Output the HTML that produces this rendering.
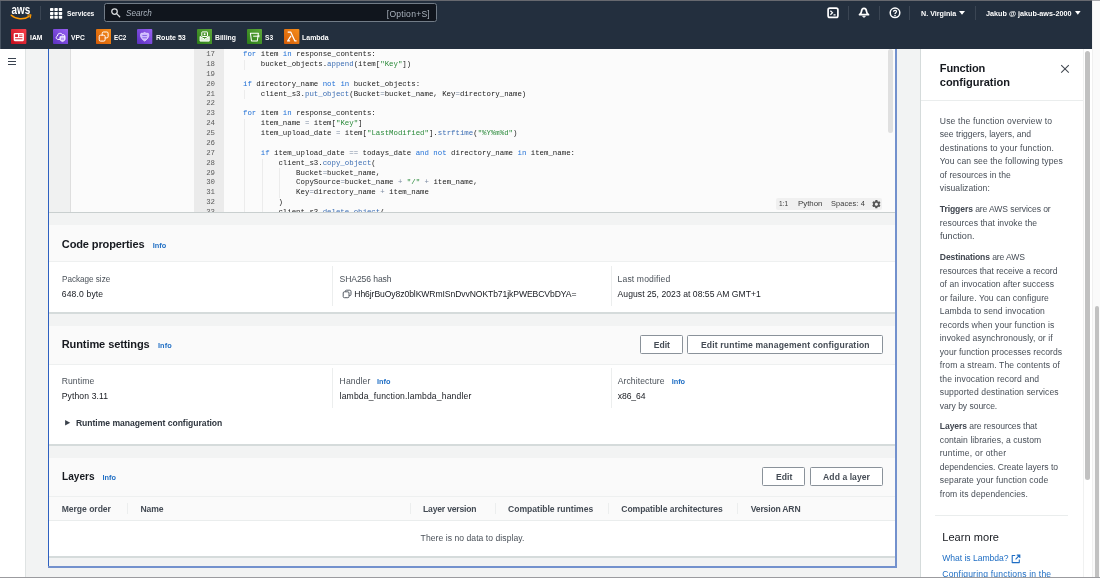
<!DOCTYPE html>
<html lang="en">
<head>
<meta charset="utf-8">
<title>Lambda - Function configuration</title>
<style>
*{box-sizing:border-box;margin:0;padding:0}
html,body{width:1100px;height:578px;overflow:hidden;background:#f2f3f3;font-family:"Liberation Sans",sans-serif;color:#16191f}
.a{position:absolute}
#tx{position:absolute;left:0;top:0;width:1100px;height:578px;will-change:transform}
.t{position:absolute;white-space:nowrap;line-height:1}
#nav{left:0;top:0;width:1091.800px;height:48.600px;background:#232f3e}
.nd{width:1px;background:#3a4553}
#pagesb{left:1091.800px;top:0;width:8.200px;height:578px;background:#fafafa;border-left:1px solid #f0f0f0}
#pagethumb{left:1094.600px;top:305.800px;width:4.400px;height:280px;background:#c1c1c1;border-radius:2.200px}
#leftcol{left:0;top:48.600px;width:25.500px;height:530px;background:#fff;border-right:1px solid #dfe3e3}
#panel{left:920px;top:49px;width:172px;height:529px;background:#fff;border-left:1px solid #d5dbdb}
.card-h{background:#fafafa;border-bottom:1px solid #eef0f0}
.card-b{background:#fff;border-bottom:2px solid #d5dbdb}
.btn{position:absolute;background:#fff;border:1px solid #8a929a;border-radius:1.500px}
.vd{position:absolute;width:1px;background:#eceeee}
.ig{position:absolute;width:1px;background:#ececec}
.code{font-family:"Liberation Mono",monospace;font-size:7.38px;color:#1a1a1a;white-space:pre;line-height:9.87px;will-change:transform}
.ln{font-family:"Liberation Mono",monospace;font-size:7.38px;color:#5c5c5c;white-space:pre;line-height:9.87px;text-align:right;will-change:transform}
.k{color:#1f6fd6}.f{color:#3b6db3}.s{color:#2a8a3a}.o{color:#7d8ca3}
b{font-weight:bold}

</style>
</head>
<body>
<div class="a" id="leftcol"></div>
<div class="a" id="panel"></div>
<div class="a" id="pagesb"></div>
<div class="a" id="pagethumb"></div>

<!-- editor -->
<div class="a" id="ed" style="left:49px;top:48.600px;width:847px;height:164.700px;background:#fbfbfb;border-bottom:1px solid #c9cfcf;overflow:hidden">
  <div class="a" style="left:0;top:0;width:22px;height:164px;background:#f0f1f1;border-right:1px solid #dedede"></div>
  <div class="a" style="left:145px;top:0;width:30px;height:164px;background:#ebebeb"></div>
  <div class="ig" style="left:195.300px;top:11.500px;height:9.900px"></div>
  <div class="ig" style="left:195.300px;top:41px;height:9.900px"></div>
  <div class="ig" style="left:195.300px;top:70.600px;height:100px"></div>
  <div class="ig" style="left:212.800px;top:110px;height:60px"></div>
  <div class="ig" style="left:230.200px;top:119.900px;height:29.600px"></div>
  <div class="a ln" id="lnums" style="left:144px;top:1.700px;width:22px">17
18
19
20
21
22
23
24
25
26
27
28
29
30
31
32
33</div>
  <div class="a code" id="code" style="left:194.300px;top:1.700px"><span class="k">for</span> item <span class="k">in</span> response_contents:
    bucket_objects.<span class="f">append</span>(item[<span class="s">"Key"</span>])

<span class="k">if</span> directory_name <span class="k">not</span> <span class="k">in</span> bucket_objects:
    client_s3.<span class="f">put_object</span>(Bucket<span class="o">=</span>bucket_name, Key<span class="o">=</span>directory_name)

<span class="k">for</span> item <span class="k">in</span> response_contents:
    item_name <span class="o">=</span> item[<span class="s">"Key"</span>]
    item_upload_date <span class="o">=</span> item[<span class="s">"LastModified"</span>].<span class="f">strftime</span>(<span class="s">"%Y%m%d"</span>)

    <span class="k">if</span> item_upload_date <span class="o">==</span> todays_date <span class="k">and</span> <span class="k">not</span> directory_name <span class="k">in</span> item_name:
        client_s3.<span class="f">copy_object</span>(
            Bucket<span class="o">=</span>bucket_name,
            CopySource<span class="o">=</span>bucket_name <span class="o">+</span> <span class="s">"/"</span> <span class="o">+</span> item_name,
            Key<span class="o">=</span>directory_name <span class="o">+</span> item_name
        )
        client_s3.<span class="f">delete_object</span>(</div>
  <div class="a" style="left:839px;top:0;width:5px;height:84px;background:#e0e0e0;border-radius:3px"></div>
  <div class="a" id="status" style="left:727px;top:149.100px;width:106.200px;height:12.600px;background:#f0f0f0;border-radius:2px"></div>
</div>

<!-- card 1 -->
<div class="a card-h" style="left:49px;top:225px;width:847px;height:36.800px"></div>
<div class="a card-b" style="left:49px;top:261.800px;width:847px;height:52px"></div>
<div class="vd" style="left:332px;top:266px;height:40px"></div>
<div class="vd" style="left:611px;top:266px;height:40px"></div>
<!-- card 2 -->
<div class="a card-h" style="left:49px;top:325.5px;width:847px;height:39px"></div>
<div class="a card-b" style="left:49px;top:364.500px;width:847px;height:81.600px"></div>
<div class="vd" style="left:332px;top:368px;height:40px"></div>
<div class="vd" style="left:611px;top:368px;height:40px"></div>
<div class="btn" style="left:640.3px;top:334.8px;width:42.5px;height:19.4px"></div>
<div class="btn" style="left:687.4px;top:334.8px;width:195.4px;height:19.4px"></div>
<!-- card 3 -->
<div class="a card-h" style="left:49px;top:457.500px;width:847px;height:39.500px"></div>
<div class="a" style="left:49px;top:497px;width:847px;height:24px;background:#fafafa;border-bottom:1px solid #eaeded"></div>
<div class="a card-b" style="left:49px;top:521px;width:847px;height:36.700px"></div>
<div class="btn" style="left:762.3px;top:466.6px;width:42.8px;height:19.8px"></div>
<div class="btn" style="left:810px;top:466.6px;width:73.1px;height:19.8px"></div>
<div class="vd" style="left:127px;top:503px;height:11px"></div>
<div class="vd" style="left:410px;top:503px;height:11px"></div>
<div class="vd" style="left:495px;top:503px;height:11px"></div>
<div class="vd" style="left:608px;top:503px;height:11px"></div>
<div class="vd" style="left:737px;top:503px;height:11px"></div>

<!-- panel -->
<div class="a" style="left:921px;top:100px;width:162px;height:1px;background:#eaeded"></div>
<div class="a" style="left:1083px;top:49px;width:1px;height:529px;background:#f0f1f1"></div>
<div class="a" style="left:1085.100px;top:51px;width:4.800px;height:428.500px;background:#c1c1c1;border-radius:2.500px"></div>
<div class="a" style="left:935px;top:515px;width:133px;height:1px;background:#eaeded"></div>


<!-- misc icons -->
<div class="a" style="left:8px;top:57.6px;width:8.400px;height:1px;background:#3a4350"></div>
<div class="a" style="left:8px;top:60.8px;width:8.400px;height:1px;background:#3a4350"></div>
<div class="a" style="left:8px;top:64.0px;width:8.400px;height:1px;background:#3a4350"></div>
<svg class="a" style="left:341.500px;top:288.500px" width="10.500" height="10" viewBox="0 0 10.500 10">
  <rect x="3.300" y="1.200" width="5.700" height="5.400" rx="1.200" fill="#fff" stroke="#545b64" stroke-width="1"/>
  <rect x="1.200" y="2.800" width="5.800" height="5.900" rx="1.200" fill="#fff" stroke="#545b64" stroke-width="1"/>
</svg>
<svg class="a" style="left:65px;top:420px" width="5.500" height="6" viewBox="0 0 5.500 6"><path d="M.1 .1L5.200 2.800L.1 5.500Z" fill="#3a414b"/></svg>
<svg class="a" style="left:1060px;top:63.500px" width="10" height="10" viewBox="0 0 10 10"><path d="M1.200 1.200L8.800 8.600M8.800 1.200L1.200 8.600" stroke="#414750" stroke-width="1.050" fill="none"/></svg>
<svg class="a" style="left:1011px;top:553.500px" width="10" height="10" viewBox="0 0 10 10">
  <path d="M4.200 1.500H1.200V8.600H8.300V5.600" stroke="#1f6ec4" stroke-width="1.100" fill="none" stroke-linejoin="round"/>
  <path d="M5.800 1.100H8.800V4.100M8.700 1.200L4.600 5.300" stroke="#1f6ec4" stroke-width="1.100" fill="none"/>
</svg>
<svg class="a" style="left:870.600px;top:198.500px" width="10.800" height="10.400" viewBox="0 0 24 24">
  <path fill="#555" d="M19.140 12.940c.040-.300.060-.610.060-.940 0-.320-.020-.640-.070-.940l2.030-1.580a.490.490 0 0 0 .120-.610l-1.920-3.320a.488.488 0 0 0-.590-.220l-2.390.960c-.500-.380-1.030-.700-1.620-.940l-.360-2.540a.484.484 0 0 0-.480-.410h-3.840c-.240 0-.430.170-.470.410l-.360 2.540c-.590.240-1.130.570-1.620.940l-2.390-.960c-.220-.080-.470 0-.590.220L2.740 8.870c-.120.210-.080.470.120.610l2.030 1.580c-.50.300-.90.630-.90.940s.20.640.70.940l-2.030 1.580a.490.490 0 0 0-.120.610l1.920 3.320c.120.220.370.290.590.220l2.390-.960c.500.380 1.030.700 1.620.940l.360 2.540c.50.240.240.410.480.410h3.840c.240 0 .440-.170.470-.410l.360-2.540c.590-.240 1.130-.560 1.620-.940l2.390.960c.220.080.470 0 .590-.220l1.920-3.320c.120-.220.070-.470-.120-.610l-2.010-1.580zM12 15.600c-1.980 0-3.600-1.620-3.600-3.600s1.620-3.600 3.600-3.600 3.600 1.620 3.600 3.600-1.620 3.600-3.600 3.600z"/>
</svg>

<!-- nav -->
<div class="a" id="nav"></div>
<div class="a" style="left:0;top:0;width:1px;height:48.6px;background:#465260"></div>
<!-- aws logo -->
<svg class="a" style="left:9px;top:4px;will-change:transform" width="26" height="18" viewBox="0 0 26 18">
  <text x="2.500" y="9.700" font-family="Liberation Sans, sans-serif" font-weight="bold" font-size="13.400" fill="#fff" textLength="18.700" lengthAdjust="spacingAndGlyphs">aws</text>
  <path d="M2.300 11.300 C6.500 15.300 15 15.900 20.100 12.300" stroke="#ff9900" stroke-width="1.500" fill="none" stroke-linecap="round"/>
  <path d="M18.700 11 L21.900 10.800 L21.300 13.900" stroke="#ff9900" stroke-width="1.100" fill="none" stroke-linecap="round" stroke-linejoin="round"/>
</svg>
<div class="a nd" style="left:40.400px;top:5.800px;height:13.800px"></div>
<!-- services grid -->
<svg class="a" style="left:50.400px;top:7.500px" width="12.400" height="11" viewBox="0 0 12.400 11">
  <g fill="#fff">
  <rect x="0" y="0" width="3.400" height="3" rx=".7"/><rect x="4.400" y="0" width="3.400" height="3" rx=".7"/><rect x="8.800" y="0" width="3.400" height="3" rx=".7"/>
  <rect x="0" y="3.900" width="3.400" height="3" rx=".7"/><rect x="4.400" y="3.900" width="3.400" height="3" rx=".7"/><rect x="8.800" y="3.900" width="3.400" height="3" rx=".7"/>
  <rect x="0" y="7.800" width="3.400" height="3" rx=".7"/><rect x="4.400" y="7.800" width="3.400" height="3" rx=".7"/><rect x="8.800" y="7.800" width="3.400" height="3" rx=".7"/>
  </g>
</svg>
<!-- search -->
<div class="a" style="left:104px;top:3.300px;width:332.600px;height:19.100px;background:#10151d;border:1.600px solid #727c87;border-radius:2.500px"></div>
<svg class="a" style="left:110px;top:7px" width="12" height="12" viewBox="0 0 12 12">
  <circle cx="4.500" cy="4.500" r="2.750" stroke="#d9dcdf" stroke-width="1.250" fill="none"/>
  <path d="M6.600 6.600 L9.700 9.800" stroke="#d9dcdf" stroke-width="1.300" stroke-linecap="round"/>
</svg>
<!-- favorites icons -->
<svg class="a" style="left:11.300px;top:29.100px" width="15.400" height="15.100" viewBox="0 0 15.400 15.100">
  <defs><linearGradient id="gR" x1="0" y1="1" x2="1" y2="0"><stop offset="0" stop-color="#c40d1c"/><stop offset="1" stop-color="#f5404c"/></linearGradient></defs>
  <rect width="15.400" height="15.100" rx="1" fill="url(#gR)"/>
  <rect x="2.700" y="3.900" width="10.200" height="8.300" rx="1.100" fill="#fff"/>
  <rect x="4.100" y="5.300" width="2.900" height="2.700" fill="#e02535"/>
  <path d="M8.100 5.900h3.400M8.100 7.500h3.400" stroke="#e02535" stroke-width=".8"/>
  <path d="M4.100 9.800h7.400" stroke="#e02535" stroke-width="1"/>
</svg>
<svg class="a" style="left:53.100px;top:29.100px" width="15.300" height="15.100" viewBox="0 0 15.300 15.100">
  <defs><linearGradient id="gP" x1="0" y1="1" x2="1" y2="0"><stop offset="0" stop-color="#5a30c0"/><stop offset="1" stop-color="#9a62f5"/></linearGradient></defs>
  <rect width="15.300" height="15.100" rx="1" fill="url(#gP)"/>
  <path d="M6.600 10.400H5C3 10.400 2.400 7.800 4.400 7C4.400 4.200 8.200 3.400 9.400 5.600C11.200 5.200 12.300 6.600 11.900 7.600" stroke="#fff" stroke-width="1" fill="none" stroke-linecap="round"/>
  <path d="M9.500 6.900L12.100 7.800v2.300c0 1.300-1.300 2.100-2.600 2.500c-1.300-.4-2.600-1.200-2.600-2.500V7.800z" fill="#e4d8ff" stroke="#fff" stroke-width=".7"/>
  <path d="M8.800 8.700v2.200M10.200 8.700v2.200" stroke="#7a4fe0" stroke-width=".7"/>
</svg>
<svg class="a" style="left:95.600px;top:29.100px" width="15.300" height="15.100" viewBox="0 0 15.300 15.100">
  <defs><linearGradient id="gO" x1="0" y1="1" x2="1" y2="0"><stop offset="0" stop-color="#d45b07"/><stop offset="1" stop-color="#f78e1a"/></linearGradient></defs>
  <rect width="15.300" height="15.100" rx="1" fill="url(#gO)"/>
  <rect x="6.200" y="3" width="5.900" height="5.900" rx="1.300" fill="none" stroke="#fff" stroke-width="1"/>
  <rect x="3.200" y="6.200" width="5.900" height="5.900" rx="1.300" fill="#e8761a" stroke="#fff" stroke-width="1"/>
</svg>
<svg class="a" style="left:137.400px;top:29.100px" width="15.300" height="15.100" viewBox="0 0 15.300 15.100">
  <rect width="15.300" height="15.100" rx="1" fill="url(#gP)"/>
  <path d="M4.200 4.200C5.400 4.600 6.400 4.200 7.650 3.400C8.900 4.200 9.900 4.600 11.100 4.200C12.400 6 12 9.200 7.650 12C3.300 9.200 2.900 6 4.200 4.200Z" fill="#cdb9ff" stroke="#e6dcff" stroke-width=".9"/>
  <path d="M5.400 6.500h4.500M5.400 8.800h4.500" stroke="#7a4fe0" stroke-width=".8"/>
</svg>
<svg class="a" style="left:196.500px;top:29px" width="15.300" height="15.100" viewBox="0 0 15.300 15.100">
  <defs><linearGradient id="gG" x1="0" y1="1" x2="1" y2="0"><stop offset="0" stop-color="#2a7d18"/><stop offset="1" stop-color="#5fa83a"/></linearGradient></defs>
  <rect width="15.300" height="15.100" rx="1" fill="url(#gG)"/>
  <rect x="4.800" y="2.900" width="5.700" height="4.600" rx=".5" fill="none" stroke="#fff" stroke-width="1"/>
  <path d="M3.100 7.500L3.100 12.100H12.200V7.500L7.650 10.200Z" fill="#d6ebcf" stroke="#fff" stroke-width="1" stroke-linejoin="round"/>
  <circle cx="7.650" cy="5.200" r="1" fill="#fff"/>
</svg>
<svg class="a" style="left:247px;top:29px" width="15.100" height="15.100" viewBox="0 0 15.100 15.100">
  <rect width="15.100" height="15.100" rx="1" fill="url(#gG)"/>
  <path d="M3.400 4.200H11.400L10.300 12H4.500Z" fill="none" stroke="#fff" stroke-width="1.050" stroke-linejoin="round"/>
  <path d="M6.200 7.200H12M11.900 6.100V8.300" stroke="#fff" stroke-width="1"/>
</svg>
<svg class="a" style="left:284.200px;top:29px" width="15.400" height="15.100" viewBox="0 0 15.400 15.100">
  <rect width="15.400" height="15.100" rx="1" fill="url(#gO)"/>
  <path d="M3.700 3.100H6.700L10.900 11.900H12.600M7 6.900L3.600 12H6.100" stroke="#fff" stroke-width="1.250" fill="none" stroke-linejoin="round"/>
</svg>
<!-- right nav icons -->
<svg class="a" style="left:827.300px;top:7.100px" width="12" height="11.500" viewBox="0 0 12 11.500">
  <rect x="1.100" y="1.100" width="9.800" height="9.300" rx="1.700" fill="none" stroke="#fff" stroke-width="1.700"/>
  <path d="M3.400 3.700L5.500 5.700L3.400 7.700M6.500 7.900H8.600" stroke="#fff" stroke-width="1.200" fill="none"/>
</svg>
<div class="a nd" style="left:848px;top:5.800px;height:13.800px"></div>
<svg class="a" style="left:858px;top:6.900px" width="12" height="11.500" viewBox="0 0 12 11.500">
  <path d="M6 1.300C4 1.300 3.600 3 3.500 4.400C3.400 5.800 2.500 6.900 1.500 7.700H10.500C9.500 6.900 8.600 5.800 8.500 4.400C8.400 3 8 1.300 6 1.300Z" fill="none" stroke="#fff" stroke-width="1.700" stroke-linejoin="round"/>
  <path d="M4.600 9.200C5 10.700 7 10.700 7.400 9.200Z" fill="#fff" stroke="#fff" stroke-width=".6"/>
</svg>
<div class="a nd" style="left:879px;top:5.800px;height:13.800px"></div>
<svg class="a" style="left:888.900px;top:6.900px" width="12" height="12" viewBox="0 0 12 12">
  <circle cx="6" cy="5.800" r="4.800" fill="none" stroke="#fff" stroke-width="1.500"/>
  <path d="M4.500 4.700C4.500 2.800 7.500 2.800 7.500 4.600C7.500 5.700 6 5.700 6 6.900" fill="none" stroke="#fff" stroke-width="1.250"/>
  <circle cx="6" cy="8.500" r=".8" fill="#fff"/>
</svg>
<div class="a nd" style="left:909.200px;top:5.800px;height:13.800px"></div>
<svg class="a" style="left:958.8px;top:11.300px" width="6" height="4" viewBox="0 0 6 4"><path d="M0 0H6L3 3.800Z" fill="#fff"/></svg>
<div class="a nd" style="left:975.200px;top:5.800px;height:13.800px"></div>
<svg class="a" style="left:1075.400px;top:11.300px" width="5.600" height="4" viewBox="0 0 5.600 4"><path d="M0 0H5.600L2.800 3.800Z" fill="#fff"/></svg>

<div id="tx">
<div class="t" id="t0" style="left:61.80px;top:239.35px;font-size:11.05px;letter-spacing:-0.135px;font-weight:bold;color:#16191f;">Code properties</div>
<div class="t" id="t1" style="left:152.70px;top:242.26px;font-size:7.37px;letter-spacing:0.050px;font-weight:bold;color:#1f6ec4;">Info</div>
<div class="t" id="t2" style="left:61.80px;top:275.23px;font-size:8.59px;transform:scaleX(0.9445);transform-origin:0 0;color:#4a5159;">Package size</div>
<div class="t" id="t3" style="left:61.80px;top:289.93px;font-size:8.59px;letter-spacing:0.142px;color:#16191f;">648.0 byte</div>
<div class="t" id="t4" style="left:339.50px;top:275.23px;font-size:8.59px;letter-spacing:-0.085px;color:#4a5159;">SHA256 hash</div>
<div class="t" id="t5" style="left:354.30px;top:289.93px;font-size:8.59px;letter-spacing:-0.079px;color:#16191f;">Hh6jrBuOy8z0blKWRmISnDvvNOKTb71jkPWEBCVbDYA=</div>
<div class="t" id="t6" style="left:617.60px;top:275.23px;font-size:8.59px;letter-spacing:0.136px;color:#4a5159;">Last modified</div>
<div class="t" id="t7" style="left:617.60px;top:289.93px;font-size:8.59px;letter-spacing:0.043px;color:#16191f;">August 25, 2023 at 08:55 AM GMT+1</div>
<div class="t" id="t8" style="left:61.70px;top:338.95px;font-size:11.05px;letter-spacing:-0.102px;font-weight:bold;color:#16191f;">Runtime settings</div>
<div class="t" id="t9" style="left:157.90px;top:341.96px;font-size:7.37px;letter-spacing:0.100px;font-weight:bold;color:#1f6ec4;">Info</div>
<div class="t" id="t10" style="left:653.80px;top:340.73px;font-size:8.59px;letter-spacing:-0.051px;font-weight:bold;color:#454c55;">Edit</div>
<div class="t" id="t11" style="left:700.90px;top:340.73px;font-size:8.59px;letter-spacing:0.172px;font-weight:bold;color:#454c55;">Edit runtime management configuration</div>
<div class="t" id="t12" style="left:61.70px;top:377.43px;font-size:8.59px;letter-spacing:0.092px;color:#4a5159;">Runtime</div>
<div class="t" id="t13" style="left:61.70px;top:392.03px;font-size:8.59px;letter-spacing:0.122px;color:#16191f;">Python 3.11</div>
<div class="t" id="t14" style="left:339.60px;top:377.43px;font-size:8.59px;letter-spacing:0.108px;color:#4a5159;">Handler</div>
<div class="t" id="t15" style="left:376.90px;top:378.46px;font-size:7.37px;letter-spacing:0.025px;font-weight:bold;color:#1f6ec4;">Info</div>
<div class="t" id="t16" style="left:339.60px;top:392.13px;font-size:8.59px;letter-spacing:0.168px;color:#16191f;">lambda_function.lambda_handler</div>
<div class="t" id="t17" style="left:617.70px;top:377.43px;font-size:8.59px;letter-spacing:0.093px;color:#4a5159;">Architecture</div>
<div class="t" id="t18" style="left:671.70px;top:378.46px;font-size:7.37px;letter-spacing:-0.050px;font-weight:bold;color:#1f6ec4;">Info</div>
<div class="t" id="t19" style="left:617.70px;top:392.13px;font-size:8.59px;letter-spacing:-0.059px;color:#16191f;">x86_64</div>
<div class="t" id="t20" style="left:75.90px;top:418.63px;font-size:8.59px;letter-spacing:-0.012px;font-weight:bold;color:#2f363f;">Runtime management configuration</div>
<div class="t" id="t21" style="left:61.70px;top:471.15px;font-size:11.05px;transform:scaleX(0.9151);transform-origin:0 0;font-weight:bold;color:#16191f;">Layers</div>
<div class="t" id="t22" style="left:102.50px;top:474.16px;font-size:7.37px;font-weight:bold;color:#1f6ec4;">Info</div>
<div class="t" id="t23" style="left:775.90px;top:472.53px;font-size:8.59px;letter-spacing:0.049px;font-weight:bold;color:#454c55;">Edit</div>
<div class="t" id="t24" style="left:823.10px;top:472.53px;font-size:8.59px;letter-spacing:0.059px;font-weight:bold;color:#454c55;">Add a layer</div>
<div class="t" id="t25" style="left:61.70px;top:504.63px;font-size:8.59px;letter-spacing:-0.034px;font-weight:bold;color:#454c55;">Merge order</div>
<div class="t" id="t26" style="left:140.40px;top:504.63px;font-size:8.59px;letter-spacing:-0.044px;font-weight:bold;color:#454c55;">Name</div>
<div class="t" id="t27" style="left:423.00px;top:504.63px;font-size:8.59px;letter-spacing:-0.184px;font-weight:bold;color:#454c55;">Layer version</div>
<div class="t" id="t28" style="left:508.00px;top:504.63px;font-size:8.59px;letter-spacing:-0.007px;font-weight:bold;color:#454c55;">Compatible runtimes</div>
<div class="t" id="t29" style="left:621.30px;top:504.63px;font-size:8.59px;letter-spacing:-0.065px;font-weight:bold;color:#454c55;">Compatible architectures</div>
<div class="t" id="t30" style="left:750.80px;top:504.63px;font-size:8.59px;letter-spacing:-0.186px;font-weight:bold;color:#454c55;">Version ARN</div>
<div class="t" id="t31" style="left:420.60px;top:533.53px;font-size:8.59px;letter-spacing:0.051px;color:#4a5159;">There is no data to display.</div>
<div class="t" id="t32" style="left:939.80px;top:63.05px;font-size:11.05px;letter-spacing:-0.155px;font-weight:bold;color:#16191f;">Function</div>
<div class="t" id="t33" style="left:939.80px;top:76.55px;font-size:11.05px;letter-spacing:-0.037px;font-weight:bold;color:#16191f;">configuration</div>
<div class="t" id="t34" style="left:939.80px;top:116.53px;font-size:8.59px;letter-spacing:0.166px;color:#474e57;">Use the function overview to</div>
<div class="t" id="t35" style="left:939.80px;top:130.03px;font-size:8.59px;letter-spacing:-0.018px;color:#474e57;">see triggers, layers, and</div>
<div class="t" id="t36" style="left:939.80px;top:143.53px;font-size:8.59px;letter-spacing:0.167px;color:#474e57;">destinations to your function.</div>
<div class="t" id="t37" style="left:939.80px;top:157.03px;font-size:8.59px;letter-spacing:0.101px;color:#474e57;">You can see the following types</div>
<div class="t" id="t38" style="left:939.80px;top:170.53px;font-size:8.59px;letter-spacing:0.027px;color:#474e57;">of resources in the</div>
<div class="t" id="t39" style="left:939.80px;top:184.03px;font-size:8.59px;letter-spacing:0.070px;color:#474e57;">visualization:</div>
<div class="t" id="t40" style="left:939.80px;top:205.23px;font-size:8.59px;letter-spacing:-0.101px;color:#474e57;"><b style="color:#414750">Triggers</b> are AWS services or</div>
<div class="t" id="t41" style="left:939.80px;top:218.73px;font-size:8.59px;letter-spacing:0.058px;color:#474e57;">resources that invoke the</div>
<div class="t" id="t42" style="left:939.80px;top:232.23px;font-size:8.59px;transform:scaleX(1.0636);transform-origin:0 0;color:#474e57;">function.</div>
<div class="t" id="t43" style="left:939.80px;top:253.23px;font-size:8.59px;letter-spacing:-0.115px;color:#474e57;"><b style="color:#414750">Destinations</b> are AWS</div>
<div class="t" id="t44" style="left:939.80px;top:266.73px;font-size:8.59px;letter-spacing:-0.021px;color:#474e57;">resources that receive a record</div>
<div class="t" id="t45" style="left:939.80px;top:280.23px;font-size:8.59px;letter-spacing:0.039px;color:#474e57;">of an invocation after success</div>
<div class="t" id="t46" style="left:939.80px;top:293.73px;font-size:8.59px;letter-spacing:0.098px;color:#474e57;">or failure. You can configure</div>
<div class="t" id="t47" style="left:939.80px;top:307.23px;font-size:8.59px;letter-spacing:0.102px;color:#474e57;">Lambda to send invocation</div>
<div class="t" id="t48" style="left:939.80px;top:320.73px;font-size:8.59px;letter-spacing:0.101px;color:#474e57;">records when your function is</div>
<div class="t" id="t49" style="left:939.80px;top:334.23px;font-size:8.59px;letter-spacing:0.101px;color:#474e57;">invoked asynchronously, or if</div>
<div class="t" id="t50" style="left:939.80px;top:347.73px;font-size:8.59px;letter-spacing:0.020px;color:#474e57;">your function processes records</div>
<div class="t" id="t51" style="left:939.80px;top:361.23px;font-size:8.59px;letter-spacing:0.118px;color:#474e57;">from a stream. The contents of</div>
<div class="t" id="t52" style="left:939.80px;top:374.73px;font-size:8.59px;letter-spacing:0.122px;color:#474e57;">the invocation record and</div>
<div class="t" id="t53" style="left:939.80px;top:388.23px;font-size:8.59px;letter-spacing:0.101px;color:#474e57;">supported destination services</div>
<div class="t" id="t54" style="left:939.80px;top:401.73px;font-size:8.59px;letter-spacing:-0.051px;color:#474e57;">vary by source.</div>
<div class="t" id="t55" style="left:939.80px;top:422.33px;font-size:8.59px;letter-spacing:-0.076px;color:#474e57;"><b style="color:#414750">Layers</b> are resources that</div>
<div class="t" id="t56" style="left:939.80px;top:435.83px;font-size:8.59px;letter-spacing:0.068px;color:#474e57;">contain libraries, a custom</div>
<div class="t" id="t57" style="left:939.80px;top:449.33px;font-size:8.59px;letter-spacing:0.204px;color:#474e57;">runtime, or other</div>
<div class="t" id="t58" style="left:939.80px;top:462.83px;font-size:8.59px;letter-spacing:-0.015px;color:#474e57;">dependencies. Create layers to</div>
<div class="t" id="t59" style="left:939.80px;top:476.33px;font-size:8.59px;letter-spacing:0.097px;color:#474e57;">separate your function code</div>
<div class="t" id="t60" style="left:939.80px;top:489.83px;font-size:8.59px;letter-spacing:0.081px;color:#474e57;">from its dependencies.</div>
<div class="t" id="t61" style="left:942.30px;top:532.45px;font-size:11.05px;letter-spacing:0.020px;color:#16191f;">Learn more</div>
<div class="t" id="t62" style="left:942.30px;top:554.33px;font-size:8.59px;letter-spacing:-0.044px;color:#1f6ec4;">What is Lambda?</div>
<div class="t" id="t63" style="left:942.30px;top:570.03px;font-size:8.59px;letter-spacing:0.180px;color:#1f6ec4;">Configuring functions in the</div>
<div class="t" id="t64" style="left:66.50px;top:10.03px;font-size:8.0px;transform:scaleX(0.8292);transform-origin:0 0;font-weight:bold;color:#fff;">Services</div>
<div class="t" id="t65" style="left:126.20px;top:9.21px;font-size:9.2px;transform:scaleX(0.8858);transform-origin:0 0;font-style:italic;color:#aab3be;">Search</div>
<div class="t" id="t66" style="left:386.80px;top:9.53px;font-size:8.59px;letter-spacing:0.242px;color:#aab3be;">[Option+S]</div>
<div class="t" id="t67" style="left:920.80px;top:9.93px;font-size:8.0px;transform:scaleX(0.8929);transform-origin:0 0;font-weight:bold;color:#fff;">N. Virginia</div>
<div class="t" id="t68" style="left:986.20px;top:9.93px;font-size:8.0px;transform:scaleX(0.9046);transform-origin:0 0;font-weight:bold;color:#fff;">Jakub @ jakub-aws-2000</div>
<div class="t" id="t69" style="left:29.80px;top:33.93px;font-size:8.0px;transform:scaleX(0.8452);transform-origin:0 0;font-weight:bold;color:#fff;">IAM</div>
<div class="t" id="t70" style="left:71.30px;top:33.93px;font-size:8.0px;transform:scaleX(0.8387);transform-origin:0 0;font-weight:bold;color:#fff;">VPC</div>
<div class="t" id="t71" style="left:113.90px;top:33.93px;font-size:8.0px;transform:scaleX(0.7968);transform-origin:0 0;font-weight:bold;color:#fff;">EC2</div>
<div class="t" id="t72" style="left:155.50px;top:33.93px;font-size:8.0px;transform:scaleX(0.8817);transform-origin:0 0;font-weight:bold;color:#fff;">Route 53</div>
<div class="t" id="t73" style="left:214.80px;top:33.93px;font-size:8.0px;transform:scaleX(0.8547);transform-origin:0 0;font-weight:bold;color:#fff;">Billing</div>
<div class="t" id="t74" style="left:264.70px;top:33.93px;font-size:8.0px;transform:scaleX(0.8268);transform-origin:0 0;font-weight:bold;color:#fff;">S3</div>
<div class="t" id="t75" style="left:302.10px;top:33.93px;font-size:8.0px;transform:scaleX(0.8705);transform-origin:0 0;font-weight:bold;color:#fff;">Lambda</div>
<div class="t" id="t76" style="left:778.60px;top:200.14px;font-size:7.4px;transform:scaleX(0.8851);transform-origin:0 0;color:#3a3a3a;">1:1</div>
<div class="t" id="t77" style="left:797.50px;top:200.14px;font-size:7.4px;transform:scaleX(1.0645);transform-origin:0 0;color:#3a3a3a;">Python</div>
<div class="t" id="t78" style="left:830.90px;top:200.14px;font-size:7.4px;letter-spacing:0.125px;color:#3a3a3a;">Spaces: 4</div>
</div>
<div class="a" style="left:48px;top:48.600px;width:1.200px;height:519px;background:#2e60c0"></div>
<div class="a" style="left:895.200px;top:48.600px;width:1.700px;height:519px;background:#7391cd"></div>
<div class="a" style="left:48px;top:566px;width:848.900px;height:1.700px;background:#7391cd"></div>
<div class="a" style="left:0;top:0;width:1092px;height:1px;background:#67696f"></div>
<div class="a" style="left:1092px;top:0;width:8px;height:1px;background:#a9a9ad"></div>
<div class="a" style="left:0;top:577px;width:1100px;height:1px;background:#9b9b9f"></div>

</body>
</html>
